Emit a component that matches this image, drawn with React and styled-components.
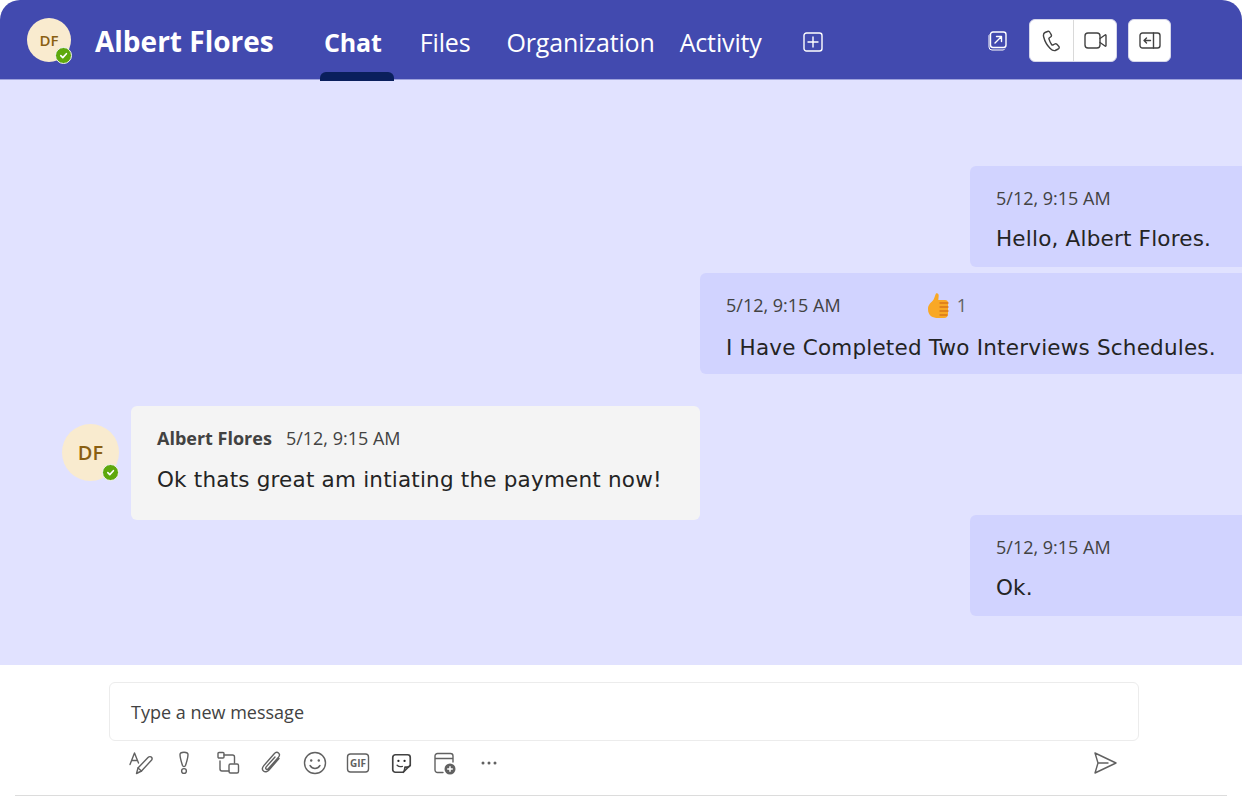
import React from 'react'
import styled, { createGlobalStyle } from 'styled-components'

const GlobalStyle = createGlobalStyle`
  html, body {
    margin: 0;
    padding: 0;
    background: #ffffff;
  }
  * {
    box-sizing: border-box;
  }
`

const Page = styled.div`
  width: 1242px;
  height: 796px;
  display: flex;
  flex-direction: column;
  overflow: hidden;
  background: #ffffff;
  font-family: "Open Sans", "Noto Sans", sans-serif;
`

const Header = styled.header`
  flex: 0 0 80px;
  display: flex;
  align-items: center;
  padding: 0 71px 0 27px;
  background: #424aaf;
  border-bottom: 1px solid #9ea2dc;
  border-radius: 20px 20px 0 0;
`

const Avatar = styled.div`
  position: relative;
  flex: none;
  width: ${p => p.$size}px;
  height: ${p => p.$size}px;
  display: flex;
  align-items: center;
  justify-content: center;
  border-radius: 50%;
  background: #f9ebcf;
  color: #8a5f12;
  font-size: ${p => p.$font}px;
  font-weight: 600;
`

const StatusDot = styled.span`
  position: absolute;
  right: ${p => p.$right}px;
  bottom: ${p => p.$bottom}px;
  width: 17px;
  height: 17px;
  display: flex;
  align-items: center;
  justify-content: center;
  border-radius: 50%;
  background: #5ea80d;
  border: 1.5px solid #f4f4f4;
`

const Title = styled.h1`
  flex: none;
  margin: 0 0 0 24px;
  padding-top: 2px;
  width: 229px;
  color: #ffffff;
  font-size: 28px;
  font-weight: 700;
  white-space: nowrap;
`

const Tabs = styled.nav`
  display: flex;
  align-items: center;
  height: 100%;
  padding-top: 4px;
`

const Tab = styled.a`
  position: relative;
  margin-right: ${p => p.$gap}px;
  color: #ffffff;
  font-size: 25px;
  font-weight: ${p => (p.$active ? 700 : 400)};
  letter-spacing: -0.15px;
  white-space: nowrap;
`

const TabMarker = styled.span`
  position: absolute;
  left: -4px;
  right: -12px;
  top: 47px;
  height: 9px;
  border-radius: 6px 6px 0 0;
  background: #0a1f5c;
`

const HeaderActions = styled.div`
  margin: 2px 0 0 auto;
  display: flex;
  align-items: center;
`

const ActionGroup = styled.div`
  display: flex;
  height: 43px;
  margin-left: ${p => p.$gap}px;
  border-radius: 6px;
  background: #ffffff;
  border: 1px solid #d5d6ea;
  overflow: hidden;
`

const ActionButton = styled.button`
  width: ${p => p.$width}px;
  display: flex;
  align-items: center;
  justify-content: center;
  padding: 0;
  border: 0;
  background: transparent;
  & + & {
    border-left: 1px solid #d9d9d9;
  }
`

const Thread = styled.main`
  flex: 1;
  display: flex;
  flex-direction: column;
  align-items: flex-end;
  padding-top: 86px;
  background: #e1e2ff;
`

const Bubble = styled.div`
  width: ${p => p.$width}px;
  height: 101px;
  margin-bottom: 6px;
  padding: 20px 26px 0;
  background: #d1d3ff;
  border-radius: 6px 0 0 6px;
`

const MetaRow = styled.div`
  display: flex;
  align-items: center;
  height: 24px;
  color: #424242;
  font-size: 18px;
`

const Reaction = styled.span`
  display: flex;
  align-items: center;
  gap: 7px;
  margin-left: 86px;
  color: #616161;
`

const Text = styled.p`
  margin: ${p => p.$gap}px 0 0;
  color: #242424;
  font-family: "DejaVu Sans", "Inter", sans-serif;
  font-size: 21.5px;
  letter-spacing: 0.2px;
  line-height: 26px;
  white-space: nowrap;
`

const IncomingRow = styled.div`
  align-self: flex-start;
  display: flex;
  margin: 26px 0 -5px 62px;
`

const IncomingAvatarSlot = styled.div`
  padding: 18px 12px 0 0;
`

const IncomingBubble = styled.div`
  width: 569px;
  height: 114px;
  padding: 20px 26px 0;
  background: #f4f4f4;
  border-radius: 6px;
`

const Sender = styled.span`
  margin-right: 14px;
  font-weight: 700;
`

const Composer = styled.footer`
  flex: 0 0 131px;
  margin: 0 15px;
  padding: 17px 88px 0 94px;
  background: #ffffff;
  border-bottom: 1px solid #dcdcdc;
`

const Input = styled.div`
  height: 59px;
  padding: 0 21px;
  display: flex;
  align-items: center;
  border: 1px solid #ececec;
  border-radius: 6px;
  color: #424242;
  font-size: 18px;
`

const Toolbar = styled.div`
  display: flex;
  align-items: center;
  height: 44px;
  padding: 0 22px 0 10px;
`

const ToolIcon = styled.span`
  width: 43.5px;
  display: flex;
  justify-content: center;
`

const SendIcon = styled.span`
  margin-left: auto;
  display: flex;
`

const line = { fill: 'none', stroke: '#616161', strokeWidth: 1.4, strokeLinecap: 'round', strokeLinejoin: 'round' }
const dark = { ...line, stroke: '#424242' }
const white = { ...line, stroke: '#ffffff' }

const Check = () => (
  <svg width="9" height="9" viewBox="0 0 10 10">
    <path d="M2 5.2 4.2 7.4 8.2 3" fill="none" stroke="#fff" strokeWidth="1.8" strokeLinecap="round" strokeLinejoin="round" />
  </svg>
)

const PlusBox = () => (
  <svg width="20" height="20" viewBox="0 0 20 20">
    <rect x="1" y="1" width="18" height="18" rx="2.5" {...white} />
    <path d="M10 5v10M5 10h10" {...white} />
  </svg>
)

const PopOut = () => (
  <svg width="20" height="20" viewBox="0 0 20 20">
    <path d="M3 3.5 2 4.5V16a3 3 0 0 0 3 3h11.500l1-1" {...white} strokeWidth="1" />
    <rect x="3.500" y="1" width="15.500" height="15.500" rx="2.500" {...white} />
    <path d="M8 12l6.500-6.500M9.500 5.500h5v5" {...white} />
  </svg>
)

const Phone = () => (
  <svg width="20" height="22" viewBox="0 0 20 22">
    <path d="M5.500 1.500 3 2.500C1.500 3.200 1.200 5 1.700 7c1 4 3.500 8.500 6.500 11.500 1.500 1.500 3.500 2.500 5 2l3-1.500c1-.6 1.300-1.700.7-2.500l-2-2.200c-.6-.6-1.500-.7-2.200-.3l-1.500.9c-.6.300-1.200.200-1.600-.4-1.200-1.800-2-3.500-2.600-5.400-.2-.6 0-1.200.6-1.500l1-.6c.8-.5 1-1.400.7-2.200L8 2.500c-.5-1-1.500-1.400-2.500-1z" {...dark} />
  </svg>
)

const Video = () => (
  <svg width="23" height="17" viewBox="0 0 23 17">
    <rect x="1" y="1" width="15" height="15" rx="3" {...dark} />
    <path d="M16 6.500 21 3a.6.6 0 0 1 1 .5v10a.6.6 0 0 1-1 .5l-5-3.500" {...dark} />
  </svg>
)

const PanelBack = () => (
  <svg width="22" height="17" viewBox="0 0 22 17">
    <rect x="1" y="1" width="20" height="15" rx="2.500" {...dark} />
    <path d="M14.500 1v15M5 8.500h6.500M7.500 6 5 8.500 7.500 11" {...dark} />
  </svg>
)

const ThumbsUp = () => (
  <svg width="23" height="27" viewBox="0 0 23 27">
    <path d="M9 1.500c1.600-.6 2.800.6 2.700 2.300L11.300 8H18c2 0 3 1.300 3 3v11c0 2.500-1.500 4-4 4h-6c-5 0-10-2-10-9 0-4 2.500-6 4.500-8C7.500 7 8 3 9 1.500z" fill="#f9a825" />
    <path d="M13 11h8M13 15h8M13 19h8M13 23h7" stroke="#d9751a" strokeWidth="1.300" strokeLinecap="round" fill="none" />
  </svg>
)

const FormatIcon = () => (
  <svg width="24" height="24" viewBox="0 0 24 24">
    <path d="M1 13.500 5.500 2 9.500 12M2.500 9.500h6" {...line} />
    <path d="M7.500 22.500l1.500-5.500L19 6.500c1.200-1.200 3-1 3.700 0 .7 1 .3 2.200-.5 3L12.500 20z" {...line} />
    <path d="M9 17l3.500 3" {...line} />
  </svg>
)

const ImportantIcon = () => (
  <svg width="14" height="24" viewBox="0 0 14 24">
    <path d="M3 3.500C3 2 4.800 1.200 7 1.200S11 2 11 3.500c0 3-1.500 8-2.500 11-.5 1.300-2.500 1.300-3 0C4.500 11.500 3 6.500 3 3.500z" {...line} />
    <circle cx="7" cy="20" r="2.400" {...line} />
  </svg>
)

const LoopIcon = () => (
  <svg width="24" height="24" viewBox="0 0 24 24">
    <rect x="2" y="1.500" width="6" height="5.500" rx="1" {...line} />
    <path d="M8 4h8.500a2 2 0 0 1 2 2v6" {...line} />
    <rect x="13" y="13" width="9.500" height="9" rx="1.500" {...line} />
    <path d="M4 10v8a2 2 0 0 0 2 2h7" {...line} />
  </svg>
)

const AttachIcon = () => (
  <svg width="22" height="24" viewBox="0 0 22 24">
    <path d="M19 7.500 9 19c-1.700 2-4 2.300-5.500 1s-1.300-3.500.3-5.400L14 3c1.500-1.700 3.300-2 4.500-1 1.200 1 1.200 2.700 0 4.200L8.500 17.500c-.8 1-1.800 1.200-2.400.6-.6-.6-.5-1.500.3-2.500L15 6" {...line} />
  </svg>
)

const EmojiIcon = () => (
  <svg width="24" height="24" viewBox="0 0 24 24">
    <circle cx="12" cy="12" r="10.500" {...line} />
    <circle cx="8.200" cy="9.500" r="1.200" fill="#616161" />
    <circle cx="15.800" cy="9.500" r="1.200" fill="#616161" />
    <path d="M7 14.500c1.300 2 3 3 5 3s3.700-1 5-3" {...line} />
  </svg>
)

const GifIcon = () => (
  <svg width="24" height="24" viewBox="0 0 24 24">
    <rect x="1.500" y="3" width="21" height="18" rx="3" {...line} />
    <text x="12" y="16" textAnchor="middle" fontSize="10" fontWeight="700" fill="#616161" fontFamily="Open Sans, sans-serif">GIF</text>
  </svg>
)

const StickerIcon = () => (
  <svg width="21" height="21" viewBox="0 0 24 24">
    <path d="M5 2h14a3 3 0 0 1 3 3v9l-8 8H5a3 3 0 0 1-3-3V5a3 3 0 0 1 3-3z" {...dark} strokeWidth="1.900" />
    <path d="M22 14c-1 3-5 2-6 2-.5 2 0 4-2 6" {...dark} strokeWidth="1.900" />
    <circle cx="8.500" cy="9" r="1.300" fill="#242424" />
    <circle cx="15.500" cy="9" r="1.300" fill="#242424" />
    <path d="M7 14c1.500 1.500 3.500 2 6 1.300" {...dark} strokeWidth="1.600" />
  </svg>
)

const ScheduleIcon = () => (
  <svg width="24" height="24" viewBox="0 0 24 24">
    <path d="M10 21.500H4.500A2.500 2.500 0 0 1 2 19V5a2.500 2.500 0 0 1 2.500-2.500h13A2.500 2.500 0 0 1 20 5v6M2 7.500h18" {...line} />
    <circle cx="17" cy="18" r="5.500" fill="#616161" />
    <path d="M17 15.200v5.600M14.200 18h5.600" stroke="#fff" strokeWidth="1.500" />
  </svg>
)

const MoreIcon = () => (
  <svg width="20" height="24" viewBox="0 0 20 24">
    <circle cx="4" cy="12" r="1.500" fill="#616161" />
    <circle cx="10" cy="12" r="1.500" fill="#616161" />
    <circle cx="16" cy="12" r="1.500" fill="#616161" />
  </svg>
)

const PaperPlane = () => (
  <svg width="24" height="24" viewBox="0 0 24 24">
    <path d="M2 2 23 12 2 22 5 12zM5 12h10" {...line} />
  </svg>
)

const tools = [FormatIcon, ImportantIcon, LoopIcon, AttachIcon, EmojiIcon, GifIcon, StickerIcon, ScheduleIcon, MoreIcon]

const Outgoing = ({ width, text, reaction }) => (
  <Bubble $width={width}>
    <MetaRow>
      5/12, 9:15 AM
      {reaction && (
        <Reaction>
          <ThumbsUp /> {reaction}
        </Reaction>
      )}
    </MetaRow>
    <Text $gap={reaction ? 18 : 16}>{text}</Text>
  </Bubble>
)

export default function App() {
  return (
    <Page>
      <GlobalStyle />
      <Header>
        <Avatar $size={44} $font={15}>
          DF
          <StatusDot $right={-1} $bottom={-2}><Check /></StatusDot>
        </Avatar>
        <Title>Albert Flores</Title>
        <Tabs>
          <Tab $active $gap={38}>
            Chat
            <TabMarker />
          </Tab>
          <Tab $gap={36}>Files</Tab>
          <Tab $gap={25}>Organization</Tab>
          <Tab $gap={41}>Activity</Tab>
          <PlusBox />
        </Tabs>
        <HeaderActions>
          <PopOut />
          <ActionGroup $gap={22}>
            <ActionButton $width={43}><Phone /></ActionButton>
            <ActionButton $width={43}><Video /></ActionButton>
          </ActionGroup>
          <ActionGroup $gap={11}>
            <ActionButton $width={41}><PanelBack /></ActionButton>
          </ActionGroup>
        </HeaderActions>
      </Header>
      <Thread>
        <Outgoing width={272} text="Hello, Albert Flores." />
        <Outgoing width={542} text="I Have Completed Two Interviews Schedules." reaction="1" />
        <IncomingRow>
          <IncomingAvatarSlot>
            <Avatar $size={57} $font={20}>
              DF
              <StatusDot $right={0} $bottom={0}><Check /></StatusDot>
            </Avatar>
          </IncomingAvatarSlot>
          <IncomingBubble>
            <MetaRow>
              <Sender>Albert Flores</Sender>
              5/12, 9:15 AM
            </MetaRow>
            <Text $gap={17}>Ok thats great am intiating the payment now!</Text>
          </IncomingBubble>
        </IncomingRow>
        <Outgoing width={272} text="Ok." />
      </Thread>
      <Composer>
        <Input>Type a new message</Input>
        <Toolbar>
          {tools.map((Icon, i) => (
            <ToolIcon key={i}><Icon /></ToolIcon>
          ))}
          <SendIcon><PaperPlane /></SendIcon>
        </Toolbar>
      </Composer>
    </Page>
  )
}
